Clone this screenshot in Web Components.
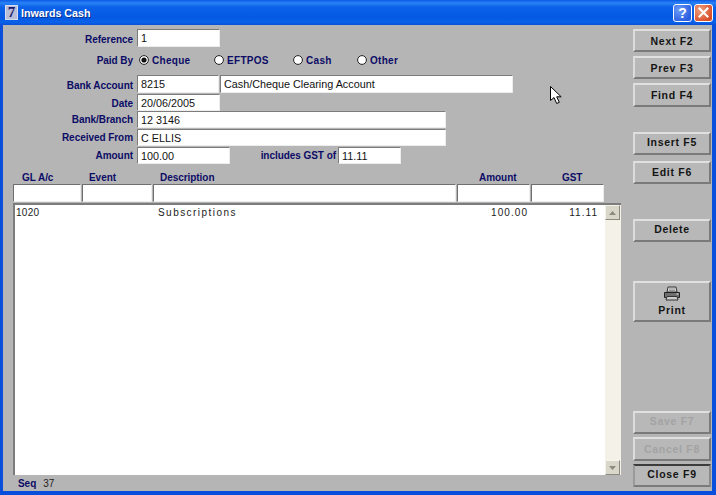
<!DOCTYPE html>
<html lang="en"><head><meta charset="utf-8"><title>Inwards Cash</title>
<style>html,body{margin:0;padding:0;background:#b5b5b5}</style></head>
<body>
<x-window>
  <x-titlebar slot="title">Inwards Cash</x-titlebar>
  <x-form>
    <x-row h="18" mt="4"><x-label dy="3">Reference</x-label><x-field w="83">1</x-field></x-row>
    <x-row h="16" mt="5"><x-label>Paid By</x-label>
      <x-radio w="75" checked>Cheque</x-radio><x-radio w="79">EFTPOS</x-radio><x-radio w="64">Cash</x-radio><x-radio w="60">Other</x-radio></x-row>
    <x-row h="18" mt="7"><x-label dy="3">Bank Account</x-label><x-field w="82">8215</x-field><x-field w="293" ml="1">Cash/Cheque Clearing Account</x-field></x-row>
    <x-row h="17" mt="1"><x-label dy="1">Date</x-label><x-field w="83">20/06/2005</x-field></x-row>
    <x-row h="17" mt="0"><x-label>Bank/Branch</x-label><x-field w="309">12 3146</x-field></x-row>
    <x-row h="17" mt="1"><x-label>Received From</x-label><x-field w="309">C ELLIS</x-field></x-row>
    <x-row h="17" mt="1"><x-label>Amount</x-label><x-field w="93">100.00</x-field><x-label w="106">includes GST of</x-label><x-field w="63" ml="2">11.11</x-field></x-row>
    <x-table></x-table>
    <x-seq></x-seq>
  </x-form>
  <x-actions>
    <x-btn h="23" mt="4">Next F2</x-btn>
    <x-btn h="23" mt="4">Prev F3</x-btn>
    <x-btn h="24" mt="4">Find F4</x-btn>
    <x-btn h="23" mt="25" up="3">Insert F5</x-btn>
    <x-btn h="23" mt="6" up="2">Edit F6</x-btn>
    <x-btn h="23" mt="35" up="3">Delete</x-btn>
    <x-btn h="41" mt="39" icon up="1">Print</x-btn>
    <x-btn h="23" mt="89" disabled up="3">Save F7</x-btn>
    <x-btn h="24" mt="3" disabled>Cancel F8</x-btn>
    <x-btn h="23" mt="3" default up="3">Close F9</x-btn>
  </x-actions>
  <x-cursor></x-cursor>
</x-window>
<script>
const LABEL = `font:bold 10px "Liberation Sans",Arial,sans-serif;letter-spacing:-.05px;color:#0c0c66;`;
const VALUE = `font:10.8px "Liberation Sans",Arial,sans-serif;color:#111;`;
function def(name, html, init){
  customElements.define(name, class extends HTMLElement{
    connectedCallback(){
      if(this.shadowRoot) return;
      const r=this.attachShadow({mode:'open'});
      r.innerHTML=typeof html==='function'?html(this):html;
      if(init) init(this,r);
    }
  });
}
def('x-window',`<style>
:host{display:block;position:relative;width:716px;height:495px;box-sizing:border-box;overflow:hidden;background:#0a4fdc}
.wrap{display:flex;flex-direction:column;height:100%}
.body{flex:1;display:flex;margin:0 4px 4px 3px;background:#b5b5b5;min-height:0}
</style><div class="wrap"><slot name="title"></slot><div class="body"><slot></slot></div></div>`);
def('x-titlebar',`<style>
:host{display:flex;align-items:center;height:25px;flex:none;box-sizing:border-box;padding:0 3px 0 5px;
background:linear-gradient(180deg,#0a5ae4 0,#2a82f6 3px,#0b62e8 7px,#0458e2 18px,#0a63ea 22px,#0a4fd8 25px);
color:#fff;font:bold 10.7px "Liberation Sans",Arial,sans-serif;letter-spacing:0;text-shadow:1px 1px 0 #0a2f90}
.ic{width:13px;height:15px;margin-right:3px;background:#b9bdd6;border:1px solid #d8dcf0;box-sizing:border-box;color:#17176b;
font:bold 15px/13px "Liberation Serif",serif;text-align:center;text-shadow:none;letter-spacing:0}
.t{flex:1}
.b{width:19px;height:18px;border:1px solid #fff;border-radius:3px;box-sizing:border-box;display:flex;align-items:center;justify-content:center;
font:bold 14px "Liberation Sans",sans-serif;text-shadow:none;letter-spacing:0;margin-left:2px}
.h{background:radial-gradient(circle at 30% 30%,#6d9cf8,#2b5fe0 75%)}
.c{background:radial-gradient(circle at 30% 30%,#f0a080,#d8502a 75%)}
</style><span class="ic">7</span><span class="t"><slot></slot></span>
<span class="b h">?</span>
<span class="b c"><svg width="11" height="11" viewBox="0 0 11 11"><path d="M1.5 1.5l8 8M9.5 1.5l-8 8" stroke="#fff" stroke-width="2" stroke-linecap="square"/></svg></span>`);
def('x-form',`<style>:host{display:flex;flex-direction:column;width:630px;flex:none}</style><slot></slot>`);
def('x-row',el=>`<style>:host{display:flex;align-items:stretch;height:${el.getAttribute('h')}px;margin-top:${el.getAttribute('mt')}px;flex:none}</style><slot></slot>`);
def('x-label',el=>`<style>:host{display:flex;align-items:center;justify-content:flex-end;flex:none;box-sizing:border-box;
width:${el.getAttribute('w')||134}px;padding-right:${el.getAttribute('w')?0:4}px;padding-top:${el.getAttribute('dy')||0}px;${LABEL}white-space:nowrap}</style><slot></slot>`);
def('x-field',el=>`<style>:host{display:flex;align-items:center;flex:none;box-sizing:border-box;width:${el.getAttribute('w')}px;margin-left:${el.getAttribute('ml')||0}px;
background:#fff;border:1px solid;border-color:#7c7c7c #ededed #ededed #7c7c7c;padding:0 3px;${VALUE}white-space:nowrap;overflow:hidden}</style><slot></slot>`);
def('x-radio',el=>`<style>:host{display:flex;align-items:center;flex:none;width:${el.getAttribute('w')}px;padding-left:2px;box-sizing:border-box;${LABEL}letter-spacing:.3px;white-space:nowrap}
svg{margin-right:3px;flex:none}</style><svg width="10" height="10" viewBox="0 0 10 10"><circle cx="5" cy="5" r="4.4" fill="#fff" stroke="#222" stroke-width="1"/>${el.hasAttribute('checked')?'<circle cx="5" cy="5" r="2.6" fill="#111"/>':''}</svg><slot></slot>`);
def('x-table',`<style>
:host{display:flex;flex-direction:column;flex:none;margin:6px 0 0 10px;width:608px}
.g{display:grid;grid-template-columns:68px 70px 303px 73px 73px;column-gap:1px;width:591px}
.hd{height:14px;align-items:center;${LABEL}white-space:nowrap}
.hd span:nth-child(1){padding-left:9px}.hd span:nth-child(2){padding-left:7px}.hd span:nth-child(3){padding-left:7px}
.hd span:nth-child(4){padding-left:22px}.hd span:nth-child(5){padding-left:31px}
.f{height:18px}.f i{display:block;background:#fff;border:1px solid;border-color:#6f6f6f #ededed #ededed #6f6f6f}
.list{display:flex;height:272px;margin-top:1px;background:#fff;border-top:2px solid #7c7c7c;border-left:2px solid #7c7c7c;box-sizing:border-box}
.rows{flex:1;min-width:0}
.r{width:589px;height:14px;align-items:center;font:10px "Liberation Sans",Arial,sans-serif;letter-spacing:1.05px;color:#222;white-space:nowrap;grid-template-columns:66px 70px 303px 73px 73px}
.r span:nth-child(1){padding-left:1px;letter-spacing:.3px}.r span:nth-child(3){padding-left:5px;letter-spacing:1.45px}
.r span:nth-child(4){text-align:right;padding-right:2px}.r span:nth-child(5){text-align:right;padding-right:6px}
.sb{width:16px;flex:none;background:#f4f1e8;display:flex;flex-direction:column;justify-content:space-between}
.ar{width:15px;height:15px;background:#d9d7c9;border:1px solid;border-color:#f4f4ec #8a8a80 #8a8a80 #f4f4ec;box-sizing:border-box;display:flex;align-items:center;justify-content:center}
</style>
<div class="g hd"><span>GL A/c</span><span>Event</span><span>Description</span><span>Amount</span><span>GST</span></div>
<div class="g f"><i></i><i></i><i></i><i></i><i></i></div>
<div class="list"><div class="rows"><div class="g r"><span>1020</span><span></span><span>Subscriptions</span><span>100.00</span><span>11.11</span></div></div>
<div class="sb"><div class="ar"><svg width="7" height="4"><path d="M3.5 0L7 4H0z" fill="#8b8b80"/></svg></div><div class="ar"><svg width="7" height="4"><path d="M0 0H7L3.5 4z" fill="#8b8b80"/></svg></div></div></div>`);
def('x-seq',`<style>:host{display:flex;align-items:center;flex:1;padding-left:15px;box-sizing:border-box;gap:7px;font:10px "Liberation Sans",Arial,sans-serif;color:#222;padding-top:1px}
b{${LABEL}}</style><b>Seq</b><span>37</span>`);
def('x-actions',`<style>:host{display:flex;flex-direction:column;width:78px;flex:none}</style><slot></slot>`);
def('x-btn',el=>{
  const dis=el.hasAttribute('disabled'),dflt=el.hasAttribute('default'),ic=el.hasAttribute('icon');
  return `<style>:host{display:flex;flex-direction:column;align-items:center;justify-content:center;flex:none;box-sizing:border-box;
  height:${el.getAttribute('h')}px;margin-top:${el.getAttribute('mt')}px;background:#b8b8b8;padding-bottom:${el.getAttribute('up')||0}px;
  border:2px solid;border-color:${dflt?'#3c3c3c #8a8a8a #7a7a7a #9a9a9a':'#e0e0e0 #7a7a7a #7a7a7a #dcdcdc'};
  font:bold 10.5px "Liberation Sans",Arial,sans-serif;letter-spacing:.7px;color:${dis?'#a3a3a3':'#141414'};white-space:nowrap}
  svg{display:block;margin-bottom:3px}</style>
  ${ic?`<svg width="18" height="15" viewBox="0 0 18 15"><path d="M5 1h8l1 5H4z" fill="#d8d8d8" stroke="#333"/><path d="M1.5 6.5h15v5h-15z" fill="#6e6e6e" stroke="#222"/><path d="M4 10.500h10l1 3.500H3z" fill="#ccc" stroke="#333"/><path d="M6 3h6M6 4.500h6" stroke="#777" stroke-width=".7"/><path d="M13.500 8h2" stroke="#eee"/></svg>`:''}<slot></slot>`;
});
def('x-cursor',`<style>:host{position:absolute;left:549px;top:85px;width:13px;height:20px;display:block}</style>
<svg width="13" height="20" viewBox="0 0 13 20"><path d="M1.500 1.500V15.500L5 12.500L7.700 18.500L10.300 17.300L7.700 11.800H12.200Z" fill="#fff" stroke="#000" stroke-width="1" stroke-linejoin="miter"/></svg>`);
</script>
</body></html>
